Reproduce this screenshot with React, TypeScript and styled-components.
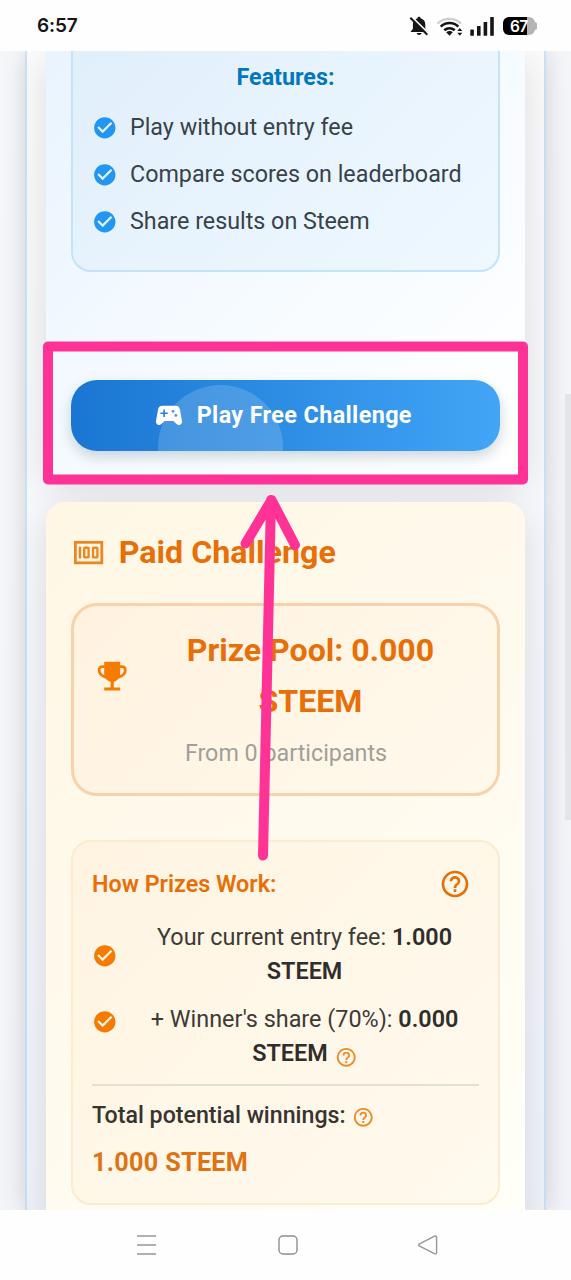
import React from "react";
import styled, { createGlobalStyle } from "styled-components";
import { MdCheckCircle, MdHelpOutline } from "react-icons/md";

const GlobalStyle = createGlobalStyle`
  * { box-sizing: border-box; }
  body { margin: 0; background: #fff; font-family: Roboto, "Liberation Sans", sans-serif; }
  svg { display: block; flex-shrink: 0; }
`;

const Phone = styled.div`
  position: relative;
  width: 571px;
  height: 1280px;
  overflow: hidden;
  display: flex;
  flex-direction: column;
  background: #fefefe;
`;

const StatusBar = styled.header`
  height: 51px;
  flex-shrink: 0;
  padding: 0 34px 0 37px;
  display: flex;
  align-items: center;
  justify-content: space-between;
  background: #fefefe;
`;

const Clock = styled.span`
  font: 600 19px/24px Inter, Roboto, sans-serif;
  letter-spacing: -0.1px;
  color: #161616;
`;

const StatusIcons = styled.div`
  display: flex;
  align-items: center;
`;

const Battery = styled.div`
  width: 32px;
  height: 18px;
  margin-left: 9px;
  border-radius: 6px;
  background: linear-gradient(90deg, #000 0 24px, #b4b4b4 24px);
  color: #fff;
  font: 600 15.5px/19px Inter, "Liberation Sans", sans-serif;
  letter-spacing: -0.7px;
  padding-left: 7px;
`;

const BatteryTip = styled.i`
  width: 2px;
  height: 8px;
  border-radius: 0 2px 2px 0;
  background: #b4b4b4;
`;

const Viewport = styled.main`
  height: 1159px;
  flex-shrink: 0;
  overflow: hidden;
  display: flex;
  justify-content: center;
  background: linear-gradient(135deg, #f5f7fa, #f1f3f8);
`;

const Frame = styled.div`
  width: 521px;
  border: solid #cbe2f6;
  border-width: 0 2px;
  padding: 0 19px;
  display: flex;
  flex-direction: column;
  gap: 25px;
  background: linear-gradient(180deg, #fbfbfc, #f1f3fb);
  box-shadow: 0 0 24px rgba(0, 0, 0, 0.13);
`;

const Card = styled.section<{ $kind: "free" | "paid" }>`
  flex-shrink: 0;
  display: flex;
  flex-direction: column;
  padding: ${(p) => (p.$kind === "free" ? "0 25px 26px" : "24px 25px 40px")};
  border-radius: ${(p) => (p.$kind === "free" ? "0 0 19px 19px" : "19px 19px 0 0")};
  background: ${(p) =>
    p.$kind === "free"
      ? "linear-gradient(135deg, #e9f4fe, #f8fcff 60%, #ffffff)"
      : "linear-gradient(135deg, #fff7e4, #fffaee 50%, #fffff8)"};
  box-shadow: 0 10px 38px rgba(0, 0, 0, 0.12);
`;

const FeatureBox = styled.div`
  height: 221px;
  padding: 13px 19px 0;
  border: 2px solid #c4e2f8;
  border-top: 0;
  border-radius: 0 0 20px 20px;
  background: linear-gradient(135deg, #e1effb, #eff8ff);
`;

const FeatureTitle = styled.h3`
  margin: 0 0 24px;
  text-align: center;
  font-size: 23.3px;
  line-height: 27px;
  font-weight: 700;
  color: #0277bd;
`;

const FeatureItem = styled.div`
  height: 47px;
  display: flex;
  align-items: flex-start;
  gap: 12.4px;
  color: #37424b;
  font-size: 23.3px;
  line-height: 25px;
  white-space: nowrap;

  svg {
    color: #2196f3;
  }
`;

const PlayButton = styled.button`
  position: relative;
  overflow: hidden;
  height: 71px;
  width: 100%;
  border: 0;
  border-radius: 26px;
  padding: 0 6.5px 2px 0;
  display: flex;
  align-items: center;
  justify-content: center;
  gap: 12px;
  background: linear-gradient(90deg, #1976d2, #42a5f5);
  color: #fff;
  font: 700 23.4px/30px Roboto, sans-serif;
  letter-spacing: 0.37px;
`;

const ButtonShadow = styled.div`
  margin-top: 108px;
  border-radius: 26px;
  box-shadow: 0 6px 14px rgba(20, 60, 90, 0.2);
`;

const Ripple = styled.span`
  position: absolute;
  left: 87px;
  top: 5px;
  width: 125px;
  height: 125px;
  border-radius: 50%;
  background: rgba(255, 255, 255, 0.16);
`;

const PaidTitle = styled.h2`
  margin: 0;
  height: 51px;
  display: flex;
  align-items: center;
  gap: 12.6px;
  color: #e86f08;
  font-size: 32.2px;
  font-weight: 700;
  white-space: nowrap;

  svg {
    margin-top: 2px;
    color: #ec8620;
  }
`;

const PrizeBox = styled.div`
  margin-top: 26px;
  height: 193px;
  padding: 19px 18px 0 19px;
  border: 3px solid #f9d2ab;
  border-radius: 26px;
  background: linear-gradient(135deg, #fff2df, #fff9ec);
`;

const PrizeRow = styled.div`
  display: flex;
  align-items: center;
  gap: 10.6px;

  svg {
    color: #f57c00;
  }
`;

const PrizeText = styled.div`
  flex: 1;
  text-align: center;
  color: #e86f08;
  font-size: 32.1px;
  font-weight: 700;
  line-height: 51px;
`;

const Participants = styled.div`
  margin-top: 7px;
  text-align: center;
  color: #a29e99;
  font-size: 23.3px;
  line-height: 38px;
`;

const HowBox = styled.div`
  margin-top: 44px;
  height: 365px;
  padding: 23px 19px 0;
  border: 2px solid #fcebcd;
  border-radius: 20px;
  background: linear-gradient(135deg, #fff4e2, #fffaee);
`;

const HowHeader = styled.div`
  display: flex;
  align-items: center;
  justify-content: space-between;
  height: 38px;
  padding-right: 8px;
  color: #e86f08;
  font-size: 23.3px;
  font-weight: 600;
`;

const HowItem = styled.div<{ $top: number; $iconTop: number }>`
  margin-top: ${(p) => p.$top}px;
  display: flex;
  gap: 12.6px;
  color: #3e3a35;
  font-size: 23.4px;
  line-height: 34.4px;

  > svg {
    margin-top: ${(p) => p.$iconTop}px;
    color: #f57c00;
  }
`;

const HowText = styled.div`
  flex: 1;
  text-align: center;
  white-space: nowrap;

  b {
    font-weight: 600;
    color: #302d2a;
  }
`;

const InlineHelp = styled(MdHelpOutline)`
  display: inline-block;
  vertical-align: -7px;
  margin-left: 1px;
  color: #ec8a26;
`;

const Divider = styled.hr`
  margin: 13.800px 0 0;
  border: 0;
  height: 2px;
  background: #e3dfd3;
`;

const TotalLabel = styled.div`
  height: 38px;
  margin-top: 10px;
  display: flex;
  align-items: center;
  gap: 6px;
  font-size: 23.2px;
  font-weight: 500;
  color: #38332f;

  svg {
    margin: 3px 0 0;
  }
`;

const TotalValue = styled.div`
  margin-top: 10px;
  font-size: 25.2px;
  line-height: 38px;
  font-weight: 700;
  letter-spacing: 0.3px;
  color: #e07214;
`;

const NavBar = styled.nav`
  flex: 1;
  display: flex;
  justify-content: space-between;
  align-items: center;
  padding: 0 132px 0 136px;
  background: #fefefe;

  svg:nth-child(2) {
    margin-left: 2px;
  }
`;

const Scrollbar = styled.div`
  position: absolute;
  right: 0;
  top: 394px;
  width: 6px;
  height: 426px;
  background: #e4e5e9;
`;

const Annotation = styled.svg`
  position: absolute;
  left: 0;
  top: 0;
  pointer-events: none;
`;

function StatusGlyphs() {
  return (
    <svg width="86" height="22" viewBox="408 14 86 22">
      <g fill="#161616">
        <path d="M419 15.8c-.9 0-1.5.6-1.5 1.4-3 .8-4.6 3.2-4.6 6.2v4.4l-2.5 3.2h17.4l-2.5-3.2v-4.4c0-3-1.7-5.4-4.7-6.2 0-.8-.7-1.4-1.6-1.4z" />
        <path d="M416.6 32h5c-.3 1.3-1.3 2-2.5 2s-2.2-.7-2.5-2z" />
        <path d="M411.8 15.9l17 16.8" stroke="#fefefe" strokeWidth="1.8" />
        <path d="M410.3 16.8l17 17" stroke="#161616" strokeWidth="2" />
      </g>
      <g fill="none" strokeWidth="2.2">
        <path d="M437.5 22.6c6.5-6.2 17-6.2 23.5 0" stroke="#cfcfcf" />
        <path d="M440.7 25.6c5-4.8 12.8-4.8 17.6 0" stroke="#161616" strokeWidth="2.6" />
        <path d="M444.3 29.3c3-2.8 7.5-2.8 10.4 0" stroke="#161616" strokeWidth="2.6" />
      </g>
      <path d="M446.2 31.3c2-1.8 4.8-1.8 6.6 0l-3.3 3.4z" fill="#161616" />
      <path d="M457.3 30l2.5-3 2.5 3zM457.3 31.8l2.5 3 2.5-3z" fill="#161616" />
      <g fill="#161616">
        <rect x="470.3" y="28.5" width="3.6" height="6.3" rx=".6" />
        <rect x="477" y="25" width="3.6" height="9.8" rx=".6" />
        <rect x="483.6" y="21" width="3.6" height="13.8" rx=".6" />
        <rect x="490.2" y="16" width="3.6" height="18.8" rx=".6" />
      </g>
    </svg>
  );
}

function GamepadIcon() {
  return (
    <svg width="32" height="32" viewBox="0 0 32 32" fill="currentColor">
      <path
        fillRule="evenodd"
        d="M9.5 6.800h13c2.600 0 4.100 1.400 4.500 3.900l2 11.200c.4 2.300-1 4-3.200 4-1.200 0-2-.4-2.800-1.300l-2.600-2.700h-8.800l-2.600 2.700c-.8.9-1.600 1.300-2.800 1.300-2.200 0-3.600-1.700-3.200-4l2-11.200c.4-2.500 1.900-3.900 4.500-3.900zM10.300 10.500v2.900H7.400v1.600h2.900v2.900h1.600V15h2.900v-1.600h-2.900v-2.900zM20 10.900a1.400 1.400 0 1 0 0 2.800 1.400 1.400 0 1 0 0-2.800zM22.900 15a1.400 1.400 0 1 0 0 2.800 1.400 1.400 0 1 0 0-2.800z"
      />
    </svg>
  );
}

function MoneyIcon() {
  return (
    <svg width="35.2" height="35.2" viewBox="0 0 24 24" fill="none" stroke="currentColor">
      <rect x="3" y="5" width="18" height="14" strokeWidth="1.9" />
      <path d="M6.1 8v8" strokeWidth="1.700" />
      <rect x="9" y="8.700" width="3" height="6.600" rx=".5" strokeWidth="1.600" />
      <rect x="15" y="8.700" width="3" height="6.600" rx=".5" strokeWidth="1.600" />
    </svg>
  );
}

function TrophyIcon() {
  return (
    <svg width="38.4" height="38.4" viewBox="0 0 24 24" fill="currentColor">
      <path d="M7 3h10v7.500c0 2.300-1.500 4.300-4 5.100V19h4v2H7v-2h4v-3.400c-2.500-.8-4-2.800-4-5.100z" />
      <path
        d="M7.400 6H6C4.600 6 3.800 6.700 3.800 8c0 2.500 1.900 4.100 4.500 4.700M16.600 6H18c1.400 0 2.200.7 2.200 2 0 2.500-1.900 4.100-4.500 4.700"
        fill="none"
        stroke="currentColor"
        strokeWidth="1.700"
      />
    </svg>
  );
}

const features = ["Play without entry fee", "Compare scores on leaderboard", "Share results on Steem"];

export default function App() {
  return (
    <Phone>
      <GlobalStyle />
      <StatusBar>
        <Clock>6:57</Clock>
        <StatusIcons>
          <StatusGlyphs />
          <Battery>67</Battery>
          <BatteryTip />
        </StatusIcons>
      </StatusBar>

      <Viewport>
        <Frame>
          <Card $kind="free">
            <FeatureBox>
              <FeatureTitle>Features:</FeatureTitle>
              {features.map((text) => (
                <FeatureItem key={text}>
                  <MdCheckCircle size={25.6} />
                  {text}
                </FeatureItem>
              ))}
            </FeatureBox>
            <ButtonShadow>
              <PlayButton>
                <Ripple />
                <GamepadIcon />
                Play Free Challenge
              </PlayButton>
            </ButtonShadow>
          </Card>

          <Card $kind="paid">
            <PaidTitle>
              <MoneyIcon />
              Paid Challenge
            </PaidTitle>
            <PrizeBox>
              <PrizeRow>
                <TrophyIcon />
                <PrizeText>
                  Prize Pool: 0.000
                  <br />
                  STEEM
                </PrizeText>
              </PrizeRow>
              <Participants>From 0 participants</Participants>
            </PrizeBox>
            <HowBox>
              <HowHeader>
                How Prizes Work:
                <MdHelpOutline size={32} />
              </HowHeader>
              <HowItem $top={17} $iconTop={23}>
                <MdCheckCircle size={25.6} />
                <HowText>
                  Your current entry fee: <b>1.000<br />STEEM</b>
                </HowText>
              </HowItem>
              <HowItem $top={13} $iconTop={7}>
                <MdCheckCircle size={25.6} />
                <HowText>
                  + Winner's share (70%): <b>0.000<br />STEEM</b> <InlineHelp size={22.5} />
                </HowText>
              </HowItem>
              <Divider />
              <TotalLabel>
                Total potential winnings: <InlineHelp size={22.5} />
              </TotalLabel>
              <TotalValue>1.000 STEEM</TotalValue>
            </HowBox>
          </Card>
        </Frame>
      </Viewport>

      <NavBar>
        <svg width="21" height="22" viewBox="0 0 21 22" stroke="#969696" strokeWidth="1.5">
          <path d="M1 2h19M1 11h19M1 20h19" />
        </svg>
        <svg width="22" height="22" viewBox="0 0 22 22" fill="none" stroke="#8e8e8e" strokeWidth="1.4">
          <rect x="2" y="2" width="18" height="18" rx="4" />
        </svg>
        <svg width="22" height="22" viewBox="0 0 22 22" fill="none" stroke="#969696" strokeWidth="1.4">
          <path d="M2.2 10.2L17.5 2.2Q19.6 1.4 19.6 3.5V18.5Q19.6 20.5 17.5 19.6L2.2 12Q1 11 2.2 10.2Z" />
        </svg>
      </NavBar>

      <Scrollbar />
      <Annotation width="571" height="1280" fill="none" stroke="#ff3396" strokeWidth="10" strokeLinecap="round" strokeLinejoin="round">
        <rect x="48" y="346.5" width="475" height="133" />
        <path d="M263 855.5L271 500M245.5 543.5L271.5 500L295 545" />
      </Annotation>
    </Phone>
  );
}
